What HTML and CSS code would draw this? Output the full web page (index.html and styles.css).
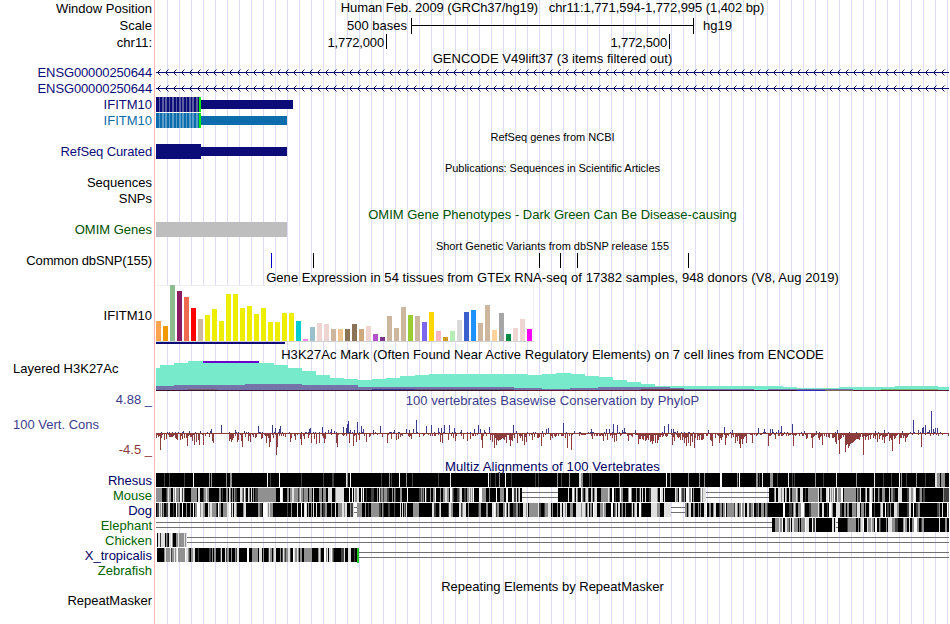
FILE: index.html
```html
<!DOCTYPE html>
<html lang="en">
<head>
  <meta charset="UTF-8"/>
  <title>Human chr11:1,771,594-1,772,995 - Genome Browser</title>
  <link rel="stylesheet" href="styles.css">
</head>
<body>

<div class="browser">
  <div class="row h16"><div class="label low">Window Position</div><div class="track title position">Human Feb. 2009 (GRCh37/hg19) &nbsp; chr11:1,771,594-1,772,995 (1,402 bp)</div></div>
  <div class="row h18">
    <div class="label low">Scale</div>
    <div class="track scale"><span class="bases">500 bases</span><span class="ruler"></span><span>hg19</span></div>
  </div>
  <div class="row h16">
    <div class="label low">chr11:</div>
    <div class="track coords"><span class="coord first">1,772,000</span><span class="coord">1,772,500</span></div>
  </div>

  <div class="row h15"><div class="label"></div><div class="track title low loose">GENCODE V49lift37 (3 items filtered out)</div></div>
  <div class="row h16"><div class="label navy tight">ENSG00000250644</div><svg class="track" id="ensg1"></svg></div>
  <div class="row h16"><div class="label navy tight">ENSG00000250644</div><svg class="track" id="ensg2"></svg></div>
  <div class="row h16"><div class="label navy">IFITM10</div><svg class="track" id="ifitm1"></svg></div>
  <div class="row h16"><div class="label blue">IFITM10</div><svg class="track" id="ifitm2"></svg></div>

  <div class="row h15"><div class="label"></div><div class="track title low small">RefSeq genes from NCBI</div></div>
  <div class="row h15"><div class="label navy tight">RefSeq Curated</div><svg class="track" id="refseq"></svg></div>
  <div class="row h16"><div class="label"></div><div class="track title low small papers">Publications: Sequences in Scientific Articles</div></div>
  <div class="row h15"><div class="label">Sequences</div></div>
  <div class="row h16"><div class="label low">SNPs</div></div>

  <div class="row h16"><div class="label"></div><div class="track title low green">OMIM Gene Phenotypes - Dark Green Can Be Disease-causing</div></div>
  <div class="row h15"><div class="label green">OMIM Genes</div><svg class="track" id="omim"></svg></div>
  <div class="row h16"><div class="label"></div><div class="track title low small">Short Genetic Variants from dbSNP release 155</div></div>
  <div class="row h15"><div class="label tight">Common dbSNP(155)</div><svg class="track" id="dbsnp"></svg></div>

  <div class="row h17"><div class="label"></div><div class="track title low wide">Gene Expression in 54 tissues from GTEx RNA-seq of 17382 samples, 948 donors (V8, Aug 2019)</div></div>
  <div class="row h61"><div class="label">IFITM10</div><svg class="track" id="gtex"></svg></div>

  <div class="row h15"><div class="label"></div><div class="track title low wide">H3K27Ac Mark (Often Found Near Active Regulatory Elements) on 7 cell lines from ENCODE</div></div>
  <div class="row h30"><div class="label left">Layered H3K27Ac</div><svg class="track" id="h3k"></svg></div>

  <div class="row h17"><div class="label slate">4.88 _</div><div class="track title low slate loose">100 vertebrates Basewise Conservation by PhyloP</div></div>
  <div class="row h50">
    <div class="label cons"><span class="slate">100 Vert. Cons</span><span class="maroon">-4.5 _</span></div>
    <svg class="track" id="phylop"></svg>
  </div>

  <div class="row h15"><div class="label"></div><div class="track title low deep multiz">Multiz Alignments of 100 Vertebrates</div></div>
  <div class="row h15"><div class="label deep">Rhesus</div><svg class="track" id="rhesus"></svg></div>
  <div class="row h15"><div class="label green2">Mouse</div><svg class="track" id="mouse"></svg></div>
  <div class="row h15"><div class="label deep">Dog</div><svg class="track" id="dog"></svg></div>
  <div class="row h15"><div class="label green2">Elephant</div><svg class="track" id="elephant"></svg></div>
  <div class="row h15"><div class="label green2">Chicken</div><svg class="track" id="chicken"></svg></div>
  <div class="row h15"><div class="label deep">X_tropicalis</div><svg class="track" id="xtrop"></svg></div>
  <div class="row h15"><div class="label green2">Zebrafish</div></div>

  <div class="row h16"><div class="label"></div><div class="track title low">Repeating Elements by RepeatMasker</div></div>
  <div class="row h14"><div class="label">RepeatMasker</div></div>
</div>

<script src="script.js"></script>
</body>
</html>
```
FILE: styles.css
```css
* {
  margin: 0;
  padding: 0;
  box-sizing: border-box;
}
body {
  background: #fff;
  color: #000;
  font-family: "Liberation Sans", Arial, sans-serif;
  font-size: 13px;
  overflow: hidden;
}
.browser {
  width: 950px;
  height: 624px;
  /* red divider, then a guide line every 12px */
  background:
    linear-gradient(#ffb4b4, #ffb4b4) 154px 0 / 1px 100% no-repeat,
    repeating-linear-gradient(90deg, #dcdcf8 0 1px, transparent 1px 12px) 167px 0 / 783px 100% no-repeat;
}
.row {
  display: grid;
  grid-template-columns: 155px 795px;
  white-space: pre;
}
.label {
  text-align: right;
  padding-right: 3px;
}
.left {
  text-align: left;
  padding-left: 13px;
}
.title { text-align: center; }
.small { font-size: 11px; }
.low { padding-top: 1px; }
svg.track {
  display: block;
  width: 795px;
  height: 100%;
  shape-rendering: crispEdges;
}

.tight { letter-spacing: -0.13px; }
.position { letter-spacing: -0.07px; }
.papers { letter-spacing: -0.06px; }
.loose { letter-spacing: 0.03px; }
.wide { letter-spacing: 0.06px; }
.multiz { letter-spacing: 0.11px; }

.h14 { height: 14px; line-height: 14px; }
.h15 { height: 15px; line-height: 15px; }
.h16 { height: 16px; line-height: 16px; }
.h17 { height: 17px; line-height: 17px; }
.h18 { height: 18px; line-height: 18px; }
.h30 { height: 30px; line-height: 15px; }
.h50 { height: 50px; line-height: 17px; }
.h61 { height: 61px; line-height: 61px; }

.navy { color: #0c0c78; }
.blue { color: #0c6cac; }
.green { color: #005000; }
.green2 { color: #006400; }
.slate { color: #3c3c8c; }
.maroon { color: #8c3c3c; }
.deep { color: #000064; }

.scale {
  display: flex;
  align-items: center;
}
.bases {
  width: 252px;
  text-align: right;
}
.ruler {
  width: 283px;
  height: 16px;
  margin: 0 9px 0 4px;
  border-left: 1px solid #000;
  border-right: 1px solid #000;
  background: linear-gradient(#000, #000) 0 7px / 100% 1px no-repeat;
}
.coords {
  display: flex;
  line-height: 18px;
  letter-spacing: -0.15px;
}
.coord {
  width: 283px;
  height: 15px;
  padding-right: 2px;
  text-align: right;
  border-right: 1px solid #000;
}
.coord.first { width: 232px; }
.cons {
  display: flex;
  flex-direction: column;
  justify-content: space-between;
  padding-left: 13px;
}
.cons .slate {
  text-align: left;
  padding-top: 8px;
}
```
FILE: script.js
```js
const NS = "http://www.w3.org/2000/svg";
const LEFT = 155;
const RIGHT = 949;

function rect(svg, x, y, w, h, fill) {
  const r = document.createElementNS(NS, "rect");
  r.setAttribute("x", x);
  r.setAttribute("y", y);
  r.setAttribute("width", w);
  r.setAttribute("height", h);
  r.setAttribute("fill", fill);
  svg.appendChild(r);
}

// every track uses the same x axis: 155..950
function track(id, height) {
  const svg = document.getElementById(id);
  svg.setAttribute("viewBox", LEFT + " 0 795 " + height);
  svg.setAttribute("preserveAspectRatio", "none");
  return svg;
}

function random(seed) {
  return () => {
    seed = (seed * 1664525 + 1013904223) >>> 0;
    return seed / 4294967296;
  };
}

// introns with strand arrows
function intron(id) {
  const svg = track(id, 16);
  rect(svg, 156, 7, RIGHT - 156, 1, "#0c0c78");
  for (let x = 157; x < 945; x += 8) {
    for (const s of [-1, 1]) {
      rect(svg, x + 1, 7 + s, 1, 1, "#0c0c78");
      rect(svg, x + 2, 7 + s * 2, 1, 1, "#0c0c78");
      rect(svg, x + 3, 7 + s * 3, 1, 1, "#8c8cc0");
    }
  }
}
intron("ensg1");
intron("ensg2");

function codingGene(id, dark, light, end) {
  const svg = track(id, 16);
  rect(svg, 156, 0, 44, 15, dark);
  for (let x = 158.6; x < 199; x += 3.39) {
    rect(svg, Math.round(x), 0, Math.round(x + 1.7) - Math.round(x), 15, light);
  }
  rect(svg, 199, 0, 2, 15, "#00f000");
  rect(svg, 201, 3, end - 201, 9, dark);
}
codingGene("ifitm1", "#0c0c78", "#5c5ca0", 293);
codingGene("ifitm2", "#0c6cac", "#5c9cc8", 287);

const refseq = track("refseq", 15);
rect(refseq, 156, 0, 45, 15, "#0c0c78");
rect(refseq, 201, 3, 86, 9, "#0c0c78");

rect(track("omim", 15), 156, 0, 131, 15, "#bebebe");

const dbsnp = track("dbsnp", 15);
rect(dbsnp, 271, 0, 1, 15, "#0000c8");
[313, 539, 560, 577, 688].forEach(x => rect(dbsnp, x, 0, 1, 15, "#000"));

// GTEx tissues: [height, colour]
const Y = "#eeee00", TAN = "#cdb79e", PINK = "#eed5d2";
const tissues = [
  [20, "#ffa54f"], [15, "#ee9a00"], [56, "#8fbc8f"], [50, "#8b1c62"], [44, "#ee6a50"], [33, "#ff0000"],
  [22, TAN], [26, Y], [32, Y], [20, Y], [47, Y], [47, Y], [33, Y], [35, Y], [27, Y], [33, Y], [19, Y],
  [19, Y], [28, Y], [28, Y], [20, "#00cdcd"], [2, "#ee82ee"], [14, "#9ac0cd"], [18, PINK], [17, PINK],
  [12, TAN], [12, "#eec591"], [12, "#8b7355"], [17, "#8b7355"], [12, "#cdaa7d"], [15, PINK],
  [7, "#b452cd"], [4, "#7a378b"], [25, TAN], [13, TAN], [34, TAN], [26, "#9acd32"], [25, TAN],
  [19, "#7a67ee"], [29, "#ffd700"], [10, "#ffb6c1"], [4, "#cd9b1d"], [10, "#b4eeb4"], [21, "#d9d9d9"],
  [29, "#3a5fcd"], [31, "#1e90ff"], [18, TAN], [36, TAN], [11, "#ffd39b"], [28, "#a6a6a6"],
  [7, "#008b45"], [13, PINK], [22, PINK], [12, "#ff00ff"]
];
const gtex = track("gtex", 61);
rect(gtex, 156, 0, 378, 57, "#f0f0f0");
rect(gtex, 156, 1, 377, 55, "#fff");
rect(gtex, 156, 56, 378, 1, "#d2d2d2");
tissues.forEach(([h, c], i) => rect(gtex, 156 + i * 7, 56 - h, 5, h, c));
rect(gtex, 156, 57, 129, 2, "#0c0c78");

// layered H3K27Ac: [start x, top y] steps
function steps(svg, data, fill) {
  data.forEach(([x, y], i) => {
    const end = i + 1 < data.length ? data[i + 1][0] : RIGHT;
    rect(svg, x, y, end - x, 29 - y, fill);
  });
}
const h3k = track("h3k", 30);
steps(h3k, [
  [156, 7], [160, 4], [174, 2], [188, 0], [203, 1], [259, 2], [274, 4], [288, 7], [302, 10], [316, 14],
  [330, 17], [344, 18], [358, 19], [372, 18], [386, 17], [400, 15], [415, 14], [429, 13], [528, 14],
  [542, 13], [556, 12], [571, 13], [585, 15], [599, 16], [613, 19], [627, 21], [641, 23], [655, 25],
  [783, 26], [797, 27], [839, 26], [895, 25], [938, 26]
], "#78eacc");
steps(h3k, [
  [156, 25], [174, 24], [245, 23], [302, 24], [358, 26], [514, 27], [542, 28], [570, 27], [598, 26],
  [670, 27], [684, 28], [726, 28], [754, 29], [768, 28], [853, 29]
], "#7474a8");
rect(h3k, 203, 0, 56, 2, "#6a00d0");
rect(h3k, 156, 29, 793, 1, "#3c1432");
rect(h3k, 188, 28, 29, 1, "#78606c");
rect(h3k, 372, 28, 43, 1, "#3c3c96");
rect(h3k, 415, 28, 99, 1, "#5a5478");
rect(h3k, 500, 29, 170, 1, "#64142c");
rect(h3k, 641, 28, 43, 1, "#6c3c50");
rect(h3k, 797, 29, 28, 1, "#2828b4");
rect(h3k, 825, 29, 28, 1, "#786450");
rect(h3k, 853, 29, 96, 1, "#64142c");
rect(h3k, 881, 28, 57, 1, "#70b478");

// PhyloP scores, x:height pairs either side of the zero line
const up = `167:1 178:1 183:2 189:2 200:2 207:1 210:2 211:4 221:8 235:3 244:2 246:1 258:7 272:8 275:5 279:4 280:7
309:4 310:5 322:6 328:3 331:4 334:2 343:6 346:5 347:9 348:12 350:3 354:3 357:11 361:7 363:4 373:3 380:7 394:3 406:4 409:3
413:4 416:13 426:7 431:8 438:5 441:5 444:8 449:8 454:5 461:3 474:4 478:8 480:4 484:3 489:6 513:8 516:2 542:2 546:4 548:5
563:10 574:2 591:4 606:4 609:4 613:9 617:8 622:3 624:5 635:3 664:7 668:9 671:4 673:4 677:2 708:3 724:6 732:3 758:5 764:4
770:4 772:4 778:3 781:7 792:9 804:2 816:2 837:3 875:2 884:3 902:2 913:13 918:3 922:5 923:6 925:8 929:3 931:22 933:4 935:5 937:5`;
const down = `156:4 158:3 160:16 161:4 164:6 166:5 169:3 170:3 171:3 172:3 175:4 176:5 177:6 180:6 182:5 184:4 186:4 187:12
190:3 191:3 192:7 194:11 196:8 198:6 199:11 203:11 205:2 209:3 212:7 213:9 229:7 230:5 231:8 232:6 233:4 235:2 237:8 238:6
241:7 242:13 245:3 248:7 250:8 253:3 255:4 256:3 261:5 262:4 266:9 268:4 269:13 270:8 273:4 276:21 277:13 281:2 283:2 285:3
290:8 291:4 295:6 300:5 301:11 304:5 308:4 311:9 314:5 316:10 319:9 323:4 324:9 325:5 336:9 337:13 349:9 353:12 356:8 359:6
366:8 369:3 370:2 382:3 387:9 391:5 396:6 398:5 400:3 409:3 411:5 419:3 423:2 434:2 440:8 442:9 448:6 453:4 455:7 463:5 467:7
470:5 481:6 482:14 486:2 490:6 492:8 494:14 496:11 498:7 506:9 510:12 512:7 517:9 522:7 524:11 526:8 532:6 541:12 550:6
565:4 567:14 571:16 579:2 592:5 603:7 607:6 612:4 614:8 616:7 628:7 632:3 638:10 645:7 650:8 652:10 655:9 657:9 662:3
672:11 674:7 680:6 684:9 686:12 688:9 690:12 692:8 694:14 697:6 701:6 710:6 711:7 712:12 719:9 721:6 725:11 735:9 739:10
740:14 742:10 746:9 752:9 768:12 775:5 793:12 806:5 812:14 819:6 822:11 835:8 836:10 839:20 845:18 846:11 847:10 848:14
849:12 850:10 851:9 852:9 853:8 854:7 855:6 856:5 863:21 870:5 877:8 882:6 884:9 889:7 892:17 899:10 905:8 921:13`;
const pairs = text => text.split(/\s+/).map(p => p.split(":").map(Number));
const phylop = track("phylop", 50);
rect(phylop, 156, 25, 793, 1, "#8c3c3c");
// low scores between the peaks: [from, to, depth, share of bases]
const rnd = random(11);
[[156, 205, 2, .4], [229, 490, 2, .35], [490, 512, 6, .9], [512, 560, 4, .5], [560, 636, 2, .4], [636, 660, 7, .95],
 [660, 680, 4, .5], [680, 708, 6, .8], [708, 735, 4, .5], [735, 745, 7, .9], [745, 805, 2, .5], [805, 838, 4, .5],
 [838, 895, 6, .85], [895, 912, 4, .6], [912, 949, 2, .3]].forEach(([from, to, depth, share]) => {
  for (let x = from; x < to; x++) {
    if (rnd() < share) rect(phylop, x, 26, 1, Math.ceil(rnd() * depth), "#8c3c3c");
    else if (rnd() < .3) rect(phylop, x, 24, 1, 1, "#3c3c8c");
  }
});
pairs(down).forEach(([x, h]) => rect(phylop, x, 26, 1, h, "#8c3c3c"));
pairs(up).forEach(([x, h]) => rect(phylop, x, 25 - h, 1, h, "#3c3c8c"));

// gap in the alignment, drawn as a double line
function gap(svg, from, to) {
  rect(svg, from, 4, to - from, 1, "#707070");
  rect(svg, from, 9, to - from, 1, "#707070");
}

const GREYS = ["#000", "#404040", "#909090", "#e0e0e0", "#fff"];
const MIXED = [.37, .47, .73, .92];
const DARK = [.48, .6, .8, .93];
const PALE = [.16, .27, .66, .92];

function bases(svg, from, to, mix, rnd) {
  let x = from;
  while (x < to) {
    const v = rnd();
    let shade = mix.findIndex(m => v < m);
    if (shade < 0) shade = 4;
    let w = rnd() < .7 ? 1 : 2;
    if (shade === 0 && rnd() < .25) w += 2;
    w = Math.min(w, to - x);
    rect(svg, x, 0, w, 14, GREYS[shade]);
    x += w;
  }
}
function blocks(svg, list) {
  list.forEach(([x, w, c]) => rect(svg, x, 0, w, 14, GREYS[c]));
}

const rhesus = track("rhesus", 15);
rect(rhesus, 156, 0, 793, 14, "#000");
blocks(rhesus, [
  [164, 1, 1], [169, 1, 1], [184, 1, 1], [193, 1, 4], [209, 1, 2], [211, 1, 2], [226, 1, 2], [230, 2, 2], [267, 1, 4],
  [270, 1, 1], [279, 1, 4], [301, 1, 1], [323, 1, 1], [332, 2, 1], [346, 1, 3], [347, 1, 2], [350, 1, 4], [381, 1, 1],
  [389, 1, 2], [391, 1, 1], [399, 1, 4], [406, 1, 2], [412, 1, 1], [438, 1, 1], [450, 1, 3], [488, 1, 4], [490, 1, 1],
  [495, 1, 1], [499, 1, 2], [505, 1, 4], [511, 1, 1], [535, 1, 1], [538, 1, 1], [557, 1, 2], [561, 1, 1], [569, 1, 2],
  [579, 2, 3], [581, 2, 2], [589, 1, 1], [591, 1, 1], [619, 1, 2], [666, 1, 4], [670, 1, 2], [688, 1, 2], [699, 1, 2],
  [704, 1, 2], [720, 2, 4], [737, 1, 2], [739, 1, 4], [756, 2, 2], [759, 1, 1], [762, 1, 3], [770, 3, 2], [777, 1, 1],
  [788, 1, 3], [792, 1, 1], [794, 1, 1], [815, 1, 2], [823, 1, 1], [836, 1, 3], [856, 1, 2], [874, 1, 3], [883, 1, 1],
  [891, 1, 1], [899, 1, 4], [901, 1, 2], [906, 1, 1], [916, 1, 2], [925, 1, 1], [935, 2, 3], [937, 3, 2], [941, 4, 2]
]);

const mouse = track("mouse", 15);
const m = random(5);
bases(mouse, 156, 180, PALE, m);
bases(mouse, 180, 350, MIXED, m);
bases(mouse, 350, 480, DARK, m);
bases(mouse, 480, 522, MIXED, m);
gap(mouse, 522, 558);
bases(mouse, 558, 706, MIXED, m);
gap(mouse, 706, 769);
bases(mouse, 769, 949, MIXED, m);
blocks(mouse, [[156, 5, 2], [191, 6, 2], [258, 18, 2], [337, 7, 3], [520, 2, 0], [558, 5, 0], [601, 6, 2], [652, 5, 3],
  [666, 8, 0], [704, 2, 3], [769, 5, 0], [808, 10, 2], [844, 12, 2], [898, 4, 3], [925, 14, 0], [944, 5, 1]]);

const dog = track("dog", 15);
const d = random(23);
bases(dog, 156, 200, DARK, d);
bases(dog, 200, 229, PALE, d);
bases(dog, 229, 335, DARK, d);
bases(dog, 335, 354, PALE, d);
gap(dog, 354, 357);
bases(dog, 357, 525, DARK, d);
bases(dog, 525, 668, MIXED, d);
gap(dog, 671, 685);
bases(dog, 685, 949, DARK, d);
blocks(dog, [[358, 4, 2], [371, 6, 2], [413, 6, 2], [419, 7, 0], [463, 3, 3], [529, 9, 2], [652, 5, 3], [664, 7, 3],
  [727, 7, 2], [768, 6, 0], [811, 7, 2], [836, 4, 3], [852, 4, 2], [922, 15, 0]]);

const elephant = track("elephant", 15);
const e = random(41);
gap(elephant, 156, 772);
bases(elephant, 772, 836, MIXED, e);
gap(elephant, 836, 838);
bases(elephant, 838, 949, MIXED, e);
blocks(elephant, [[775, 4, 2], [838, 2, 0], [848, 8, 2], [888, 4, 3], [925, 10, 0], [940, 5, 0]]);

const chicken = track("chicken", 15);
bases(chicken, 157, 176, MIXED, random(3));
blocks(chicken, [[176, 2, 2], [178, 1, 3], [179, 5, 2], [184, 1, 3], [185, 1, 2], [186, 1, 3]]);
gap(chicken, 187, 949);

const xtrop = track("xtrop", 15);
const t = random(9);
bases(xtrop, 157, 195, PALE, t);
bases(xtrop, 195, 235, DARK, t);
bases(xtrop, 235, 270, PALE, t);
bases(xtrop, 270, 358, MIXED, t);
blocks(xtrop, [[157, 7, 0], [179, 6, 2], [252, 6, 2], [304, 8, 2], [312, 4, 0]]);
rect(xtrop, 357, 0, 2, 15, "#1ec81e");
gap(xtrop, 359, 949);
```
